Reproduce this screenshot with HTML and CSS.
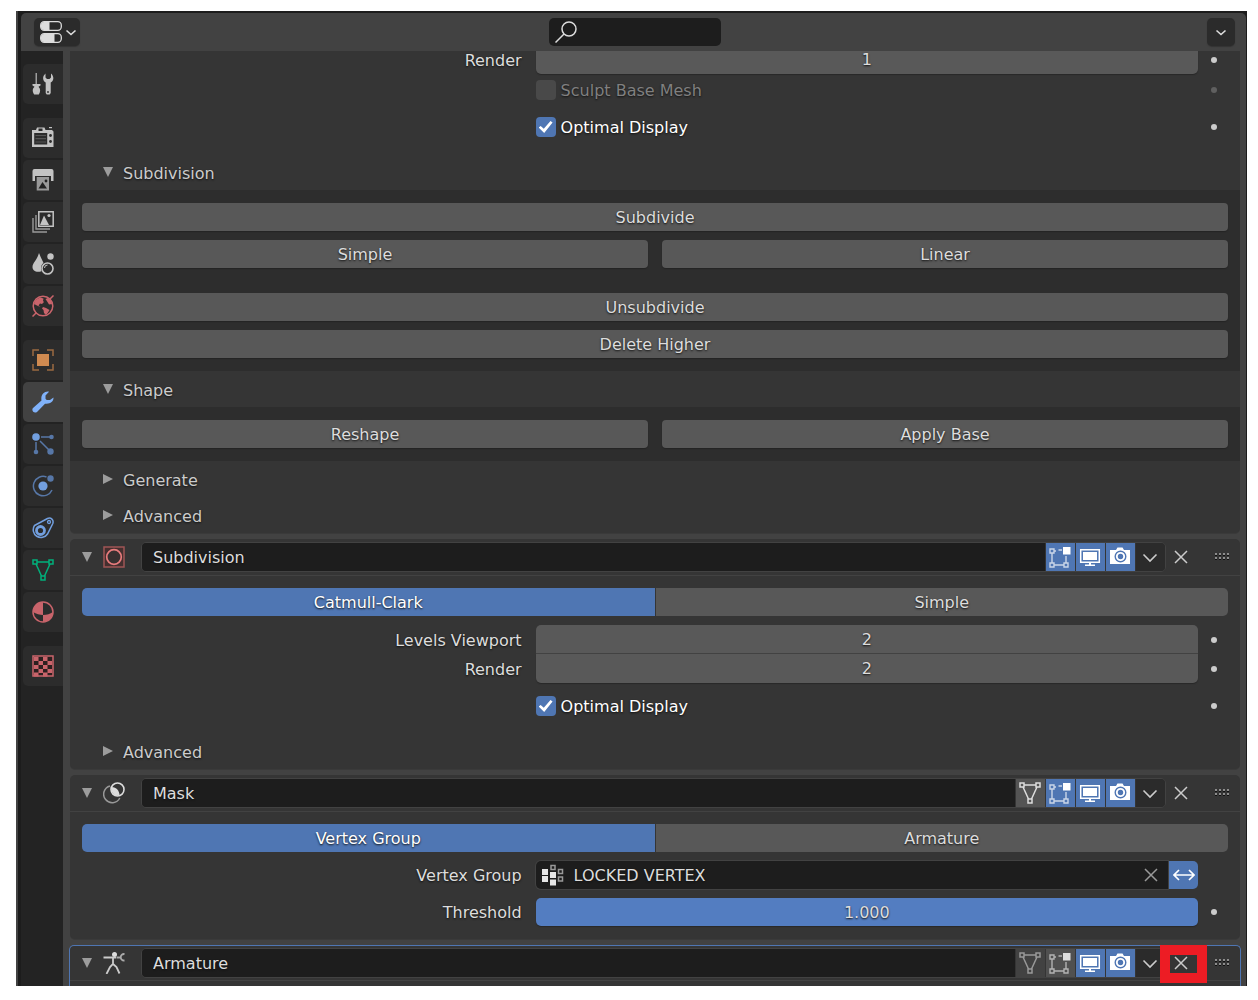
FILE: index.html
```html
<!DOCTYPE html>
<html lang="en">
<head>
<meta charset="utf-8">
<meta name="viewport" content="width=device-width, initial-scale=1">
<title>Modifier Properties</title>
<link rel="stylesheet" href="styles.css">
</head>
<body>
<svg class="sprite" aria-hidden="true">
  <symbol id="down" viewBox="0 0 10 10"><path d="M0 0h10L5 10z" fill="currentColor"/></symbol>
  <symbol id="right" viewBox="0 0 10 10"><path d="M0 0v10L10 5z" fill="currentColor"/></symbol>
  <symbol id="chevron" viewBox="0 0 22 22"><path d="M4.500 8.500l6.500 6.500 6.500-6.500" fill="none" stroke="currentColor" stroke-width="1.600"/></symbol>
  <symbol id="chevron-small" viewBox="0 0 12 12"><path d="M1.500 4.500L6 8.500l4.500-4" fill="none" stroke="currentColor" stroke-width="1.600"/></symbol>
  <symbol id="cross" viewBox="0 0 22 22"><path d="M5 5l12 12M17 5L5 17" fill="none" stroke="currentColor" stroke-width="1.500"/></symbol>
  <symbol id="grip" viewBox="0 0 15 7"><path d="M0 1h15M0 5h15" stroke="#aaa" stroke-width="1.500" stroke-dasharray="2 2"/><path d="M0 2.500h15M0 6.500h15" stroke="#111" stroke-dasharray="2 2"/></symbol>
  <symbol id="mesh" viewBox="0 0 22 22"><g fill="none" stroke="currentColor" stroke-width="1.500"><path d="M1 1h4v4H1zM17 1h4v4h-4zM9 17h4v4H9zM5 3h12M4 5l5.500 12M18 5l-5.500 12"/></g></symbol>
  <symbol id="edit" viewBox="0 0 22 22"><g fill="none" stroke="currentColor" stroke-width="1.400" opacity=".7"><path d="M1 3h4v4H1zM1 17h4v4H1zM15 17h4v4h-4zM5 5h2M9.500 4H13M3 7v10M5 19h10M17 10v7"/></g><path d="M14 1h7.500v7.500H14z" fill="currentColor"/></symbol>
  <symbol id="screen" viewBox="0 0 22 22"><path d="M1.700 3.700h18.600v12.600H1.700z" fill="none" stroke="currentColor" stroke-width="1.500"/><path d="M4 6h14v8H4zM10 16.500h2V18.500h4v1.500H6v-1.500h4z" fill="currentColor"/></symbol>
  <symbol id="camera" viewBox="0 0 22 22"><path d="M1 4h6l1.500-2.500h5L15 4h6v14H1z" fill="currentColor"/><circle cx="11.500" cy="10.500" r="5.300" fill="none" stroke="#4f76b3" stroke-width="1.400"/><circle cx="11.500" cy="10.500" r="2.700" fill="#4f76b3"/></symbol>
  <symbol id="editor" viewBox="0 0 22 22"><g fill="none" stroke="#ddd" stroke-width="1.300"><rect x="0.700" y="0.700" width="20.600" height="8.600" rx="3.500"/><rect x="0.700" y="12.700" width="20.600" height="8.600" rx="3.500"/></g><path d="M4 1h5.500v8H4a3 3 0 0 1-3-3V4a3 3 0 0 1 3-3zM4 13h10.500v8H4a3 3 0 0 1-3-3v-2a3 3 0 0 1 3-3z" fill="#ddd"/></symbol>
  <symbol id="search" viewBox="0 0 22 22"><g fill="none" stroke="#ddd" stroke-width="1.500"><circle cx="14" cy="8" r="7"/><path d="M9 13l-8.500 8.500"/></g></symbol>
  <symbol id="tool" viewBox="0 0 22 22"><path d="M3.500 0H5v11H3.500z" opacity=".75"/><path d="M.500 11h8v1.500l-2 1.200c2.300 2.300 2 5.300.3 7.800H2.200C.500 19 0 16 2.500 13.700l-2-1.200z"/><path d="M13.500 .500V4.500L15 6h2.500L19 4.500V.500c3.300 3 3 7-.3 9V20l-1 1.500h-3l-1-1.500V9.500c-3.300-2-3.500-6-.2-9z"/><circle cx="16" cy="19" r=".9" fill="#2c2c2c"/></symbol>
  <symbol id="render" viewBox="0 0 22 22"><path d="M0 3h4l1-2.500h7.500l1 2.500H20l1.500 1.500V20H0z"/><path d="M17 0h3v1.200h-3z"/><path d="M6.500 1.500h4V4h-4zM2.200 6h13v11.500h-13z" fill="#2c2c2c"/><path d="M3.500 8.500h10.500M3.500 11.700h10.500M3.500 15h10.500" stroke="#555" stroke-width="1.200"/><g fill="#2c2c2c"><circle cx="18.500" cy="8.500" r="1.400"/><circle cx="18.500" cy="14.500" r="1.400"/></g></symbol>
  <symbol id="output" viewBox="0 0 22 22"><path d="M2.500 0h17a2 2 0 0 1 2 2v10h-2.500V7h-16v5H.500V2a2 2 0 0 1 2-2z"/><path d="M4.700 8h12.300v13.500H4.700z" fill="#999"/><path d="M6.500 19.500l4-6.500 4.500 6.500z" fill="#222"/><circle cx="14" cy="12" r="1.400" fill="#222"/></symbol>
  <symbol id="layers" viewBox="0 0 22 22"><path d="M1 7v14h14M4 4v14h14" fill="none" stroke="#999" stroke-width="1.400"/><path d="M6.800 .800h14.400v14.400H6.800z" fill="none" stroke="#c3c3c3" stroke-width="1.500"/><path d="M8 14l4-9.500 5 9.500z"/><circle cx="17" cy="4.500" r="1.600"/></symbol>
  <symbol id="scene" viewBox="0 0 22 22"><path d="M7 0c2 5 3.500 7.500 4.500 10-2.500 2-3 5-2 8.200-5 1.500-9-.2-9-4.200C.500 10 5 7 7 0z"/><circle cx="18.500" cy="3.500" r="3.200"/><circle cx="15.500" cy="15.500" r="5.500" fill="none" stroke="#c3c3c3" stroke-width="1.600"/><path d="M12.500 15a3 3 0 0 1 3-3" fill="none" stroke="#c3c3c3"/></symbol>
  <symbol id="world" viewBox="0 0 22 22"><circle cx="11" cy="11" r="9.800" fill="none" stroke="#c9646b" stroke-width="1.500"/><path d="M3.500 5L8 2.500l3.500 1-.5 2.500 1 1-2 2-2-.5-1.500 2 2 1.500L6 11 2 9zM11 12l3 1 3.500 2-1.500 2.500-2 2.500-2-2-.5-3-1.500-1.500zM13.500 4l2.500-1 3.500 3 .5 3-3 .5-1.500-2.500z" fill="#c9646b"/><path d="M21.500 .500l-4 4M4.500 17.500l-4 4" stroke="#c9646b" stroke-width="1.500"/></symbol>
  <symbol id="object" viewBox="0 0 22 22"><path d="M5 5h12v12H5z" fill="#cf8a50"/><path d="M1 7V1h6M15 1h6v6M21 15v6h-6M7 21H1v-6" fill="none" stroke="#9b6940" stroke-width="1.500"/></symbol>
  <symbol id="wrench" viewBox="0 0 22 22"><path d="M1 17L9.500 9.500C8.500 4 12 0 17 .700L13.500 4.500v3.200l1.200 1.200H18l3.500-2.500C21.800 10.500 18 13.500 13 12.700L5 21c-3 2-6-1.500-4-4z" fill="#80b2fa"/></symbol>
  <symbol id="particles" viewBox="0 0 22 22"><path d="M9 4h9M4 9v9M8 8l10 10" stroke="#5777a7" stroke-width="1.500"/><circle cx="4" cy="4" r="3.800" fill="#729fdf"/><g fill="#5777a7"><circle cx="19.500" cy="4" r="2.300"/><circle cx="4" cy="19" r="2.300"/><circle cx="18.500" cy="18.500" r="3.200"/></g></symbol>
  <symbol id="physics" viewBox="0 0 22 22"><path d="M14.500 2A9.700 9.700 0 1 0 20 15" fill="none" stroke="#5777a7" stroke-width="1.500"/><circle cx="11" cy="11" r="4.600" fill="#729fdf"/><circle cx="18.500" cy="3.500" r="3.200" fill="#5777a7"/></symbol>
  <symbol id="constraint" viewBox="0 0 22 22"><g fill="none" stroke="#729fdf"><path d="M2.500 8.500L15.500 1.500C19 0 22 3 20.800 6.500L15.500 17A7.700 7.700 0 1 1 2.500 8.500z" stroke-width="1.500"/><circle cx="8.500" cy="13.500" r="4" stroke-width="2.800"/><circle cx="17" cy="5" r="1.500" stroke-width="1.300"/></g></symbol>
  <symbol id="material" viewBox="0 0 22 22"><circle cx="11" cy="11" r="10" fill="none" stroke="#c9646b" stroke-width="1.500"/><path d="M11 1v13c-3 0-7-1-10-3A10 10 0 0 1 11 1zM11 14c4 0 7-1 10-3a10 10 0 0 1-10 10z" fill="#c9646b"/></symbol>
  <symbol id="texture" viewBox="0 0 22 22"><path d="M1 1h20v20H1z" fill="#2c2020" stroke="#c9646b" stroke-width="1.500"/><path d="M2 4h18M2 12h18M2 19.500h18" stroke="#c9646b" stroke-width="4" stroke-dasharray="4.500 4.500"/><path d="M6.500 8h14.500M6.500 16h14.500" stroke="#c9646b" stroke-width="4" stroke-dasharray="4.500 4.500"/></symbol>
  <symbol id="subsurf" viewBox="0 0 22 22"><path d="M1 1h20v20H1z" fill="#452f2f" stroke="#9e5556" stroke-width="1.500"/><circle cx="11" cy="11" r="7.300" fill="#383030" stroke="#e87c7d" stroke-width="1.700"/></symbol>
  <symbol id="mask" viewBox="0 0 22 22"><path d="M7 4A8.500 8.500 0 1 0 16.800 16" fill="none" stroke="#999" stroke-width="1.500"/><circle cx="14.500" cy="7.500" r="6.500" fill="none" stroke="#ddd" stroke-width="1.600"/><path d="M8.500 5c5 0 8 4 8 8.500-5 1-9-3-8-8.500z" fill="#ddd"/></symbol>
  <symbol id="armature" viewBox="0 0 22 22"><circle cx="11.500" cy="2.500" r="2.500" fill="#ddd"/><path d="M.500 5.500H13M10 6v6l-3 3-3.500 7M10 12l3.500 3 3 6.500" fill="none" stroke="#ccc" stroke-width="1.800"/><path d="M13.500 5.500H17M21.500 2c-5-.5-5 7 0 6.500" fill="none" stroke="#aaa" stroke-width="1.800"/></symbol>
  <symbol id="group" viewBox="0 0 22 22"><path d="M0 5h6v6H0zM8 8h6v6H8zM0 12h6v6H0zM8 15.500h6v6H8z" fill="#e6e6e6"/><path d="M9 1.500h4v4H9zM16.500 5.500h4v4h-4zM16.500 13h4v4h-4z" fill="none" stroke="#999" stroke-width="1.500"/></symbol>
  <symbol id="swap" viewBox="0 0 22 22"><path d="M1 11h20M6 6l-5 5 5 5M16 6l5 5-5 5" fill="none" stroke="#fff" stroke-width="1.700"/></symbol>
</svg>

<div class="window">
  <header class="topbar">
    <button class="editor-type" aria-label="Editor type"><svg class="icon"><use href="#editor"/></svg><svg class="mini"><use href="#chevron-small"/></svg></button>
    <label class="search"><svg class="icon"><use href="#search"/></svg><input type="text" aria-label="Search"></label>
    <button class="options" aria-label="Options"><svg class="mini"><use href="#chevron-small"/></svg></button>
  </header>
  <div class="editor">
    <nav class="tabs" aria-label="Property tabs">
      <div class="tab-group">
        <button aria-label="Tool"><svg class="icon"><use href="#tool"/></svg></button>
      </div>
      <div class="tab-group">
        <button aria-label="Render"><svg class="icon"><use href="#render"/></svg></button>
        <button aria-label="Output"><svg class="icon"><use href="#output"/></svg></button>
        <button aria-label="View layer"><svg class="icon"><use href="#layers"/></svg></button>
        <button aria-label="Scene"><svg class="icon"><use href="#scene"/></svg></button>
        <button aria-label="World"><svg class="icon"><use href="#world"/></svg></button>
      </div>
      <div class="tab-group">
        <button aria-label="Object"><svg class="icon"><use href="#object"/></svg></button>
        <button class="active" aria-label="Modifiers"><svg class="icon"><use href="#wrench"/></svg></button>
        <button aria-label="Particles"><svg class="icon"><use href="#particles"/></svg></button>
        <button aria-label="Physics"><svg class="icon"><use href="#physics"/></svg></button>
        <button aria-label="Constraints"><svg class="icon"><use href="#constraint"/></svg></button>
        <button class="data" aria-label="Data"><svg class="icon"><use href="#mesh"/></svg></button>
        <button aria-label="Material"><svg class="icon"><use href="#material"/></svg></button>
      </div>
      <div class="tab-group">
        <button aria-label="Texture"><svg class="icon"><use href="#texture"/></svg></button>
      </div>
    </nav>

    <main class="properties">
      <section class="panel scrolled">
        <div class="rows">
          <div class="stack">
            <div class="row"><label for="mr-render">Render</label><input class="value" id="mr-render" type="text" value="1"><button class="dot" aria-label="Animate"></button></div>
            <div class="row disabled"><label class="check"><input type="checkbox" disabled><span>Sculpt Base Mesh</span></label><button class="dot" aria-label="Animate" disabled></button></div>
          </div>
          <div class="row"><label class="check"><input type="checkbox" checked><span>Optimal Display</span></label><button class="dot" aria-label="Animate"></button></div>
        </div>
        <button class="subheader"><svg class="tri"><use href="#down"/></svg>Subdivision</button>
        <div class="subpanel">
          <div class="buttons">
            <button class="wide">Subdivide</button>
            <button>Simple</button>
            <button>Linear</button>
          </div>
          <div class="buttons">
            <button class="wide">Unsubdivide</button>
            <button class="wide">Delete Higher</button>
          </div>
        </div>
        <button class="subheader"><svg class="tri"><use href="#down"/></svg>Shape</button>
        <div class="subpanel">
          <div class="buttons">
            <button>Reshape</button>
            <button>Apply Base</button>
          </div>
        </div>
        <button class="subheader"><svg class="tri"><use href="#right"/></svg>Generate</button>
        <button class="subheader"><svg class="tri"><use href="#right"/></svg>Advanced</button>
      </section>

      <section class="panel">
        <div class="panel-header">
          <button class="plain" aria-label="Collapse"><svg class="tri"><use href="#down"/></svg></button>
          <svg class="icon type"><use href="#subsurf"/></svg>
          <div class="name-group">
            <input type="text" value="Subdivision" aria-label="Modifier name">
            <button class="on" aria-label="Edit mode"><svg class="icon"><use href="#edit"/></svg></button>
            <button class="on" aria-label="Realtime"><svg class="icon"><use href="#screen"/></svg></button>
            <button class="on" aria-label="Render"><svg class="icon"><use href="#camera"/></svg></button>
            <button class="menu" aria-label="More"><svg class="icon"><use href="#chevron"/></svg></button>
          </div>
          <button class="plain remove" aria-label="Remove"><svg class="icon"><use href="#cross"/></svg></button>
          <svg class="grip"><use href="#grip"/></svg>
        </div>
        <div class="rows">
          <div class="segmented"><button class="on" aria-pressed="true">Catmull-Clark</button><button aria-pressed="false">Simple</button></div>
          <div class="stack">
            <div class="row"><label for="ss-view">Levels Viewport</label><input class="value first" id="ss-view" type="text" value="2"><button class="dot" aria-label="Animate"></button></div>
            <div class="row"><label for="ss-render">Render</label><input class="value last" id="ss-render" type="text" value="2"><button class="dot" aria-label="Animate"></button></div>
          </div>
          <div class="row"><label class="check"><input type="checkbox" checked><span>Optimal Display</span></label><button class="dot" aria-label="Animate"></button></div>
        </div>
        <button class="subheader"><svg class="tri"><use href="#right"/></svg>Advanced</button>
      </section>

      <section class="panel">
        <div class="panel-header">
          <button class="plain" aria-label="Collapse"><svg class="tri"><use href="#down"/></svg></button>
          <svg class="icon type"><use href="#mask"/></svg>
          <div class="name-group">
            <input type="text" value="Mask" aria-label="Modifier name">
            <button aria-label="On cage"><svg class="icon"><use href="#mesh"/></svg></button>
            <button class="on" aria-label="Edit mode"><svg class="icon"><use href="#edit"/></svg></button>
            <button class="on" aria-label="Realtime"><svg class="icon"><use href="#screen"/></svg></button>
            <button class="on" aria-label="Render"><svg class="icon"><use href="#camera"/></svg></button>
            <button class="menu" aria-label="More"><svg class="icon"><use href="#chevron"/></svg></button>
          </div>
          <button class="plain remove" aria-label="Remove"><svg class="icon"><use href="#cross"/></svg></button>
          <svg class="grip"><use href="#grip"/></svg>
        </div>
        <div class="rows">
          <div class="segmented"><button class="on" aria-pressed="true">Vertex Group</button><button aria-pressed="false">Armature</button></div>
          <div class="row">
            <label for="mask-group">Vertex Group</label>
            <div class="picker">
              <div class="picker-field"><svg class="icon"><use href="#group"/></svg><input id="mask-group" type="text" value="LOCKED VERTEX"><button class="plain" aria-label="Clear"><svg class="icon"><use href="#cross"/></svg></button></div>
              <button class="invert" aria-label="Invert"><svg class="icon"><use href="#swap"/></svg></button>
            </div>
          </div>
          <div class="row"><label for="mask-threshold">Threshold</label><input class="value slider" id="mask-threshold" type="text" value="1.000"><button class="dot" aria-label="Animate"></button></div>
        </div>
      </section>

      <section class="panel selected">
        <div class="panel-header">
          <button class="plain" aria-label="Collapse"><svg class="tri"><use href="#down"/></svg></button>
          <svg class="icon type"><use href="#armature"/></svg>
          <div class="name-group">
            <input type="text" value="Armature" aria-label="Modifier name">
            <button class="off" aria-label="On cage"><svg class="icon"><use href="#mesh"/></svg></button>
            <button class="dim" aria-label="Edit mode"><svg class="icon"><use href="#edit"/></svg></button>
            <button class="on" aria-label="Realtime"><svg class="icon"><use href="#screen"/></svg></button>
            <button class="on" aria-label="Render"><svg class="icon"><use href="#camera"/></svg></button>
            <button class="menu" aria-label="More"><svg class="icon"><use href="#chevron"/></svg></button>
          </div>
          <button class="plain remove marked" aria-label="Remove"><svg class="icon"><use href="#cross"/></svg></button>
          <svg class="grip"><use href="#grip"/></svg>
        </div>
        <div class="rows"></div>
      </section>
    </main>
  </div>
</div>
</body>
</html>
```
FILE: styles.css
```css
* { box-sizing: border-box; }

body {
  margin: 0;
  height: 100vh;
  padding: 11px 11px 14px 16px;
  background: #fff;
  color: #ddd;
  font: 16px/20px "DejaVu Sans", sans-serif;
}

button, input {
  margin: 0;
  padding: 0;
  border: 0;
  background: none;
  color: inherit;
  font: inherit;
  text-shadow: inherit;
}

button { display: flex; align-items: center; justify-content: center; }
input { min-width: 0; }
svg { display: block; flex: none; }

.sprite { position: absolute; width: 0; height: 0; }
.icon { width: 22px; height: 22px; }
.mini { width: 12px; height: 12px; }
.tri { width: 10px; height: 10px; color: #9c9c9c; }

.window {
  display: flex;
  flex-direction: column;
  height: 100%;
  padding: 2px 1px 0 3px;
  border-left: 2px solid #424242;
  background: #1c1c1c;
  overflow: hidden;
}

.topbar {
  display: grid;
  grid-template-columns: 1fr 172px 1fr;
  align-items: center;
  flex: none;
  height: 38px;
  padding: 0 11px 0 13px;
  border-radius: 5px 5px 0 0;
  background: #424242;
}

.editor-type, .options {
  height: 28px;
  border-radius: 5px;
  background: #2b2b2b;
  box-shadow: 0 1px 1px #333;
}
.editor-type { width: 46px; gap: 3px; padding-left: 2px; }
.options { width: 28px; justify-self: end; }

.search {
  display: flex;
  align-items: center;
  height: 28px;
  padding: 0 6px;
  border-radius: 5px;
  background: #1d1d1d;
}
.search input { flex: 1; }

.editor { display: flex; flex: 1; min-height: 0; }

.tabs {
  display: flex;
  flex-direction: column;
  gap: 14px;
  flex: none;
  width: 42px;
  padding: 13px 0 0 2px;
  background: #232323;
}
.tab-group { display: flex; flex-direction: column; gap: 2px; }
.tab-group button {
  width: 40px;
  height: 40px;
  border-radius: 5px 0 0 5px;
  background: #2c2c2c;
  fill: #c3c3c3;
}
.tab-group .active { background: #424242; }
.tab-group .data { color: #00b07b; }

.properties {
  display: flex;
  flex-direction: column;
  gap: 6px;
  flex: 1;
  min-width: 0;
  padding: 0 6px 0 7px;
  background: #424242;
  overflow: hidden;
}

.panel {
  flex: none;
  border-radius: 5px;
  background: #353535;
  box-shadow: 0 1px 0 #3a3a3a;
  text-shadow: 0 1px 2px #111;
}
.panel.scrolled { margin-top: -6px; }
.scrolled .rows { padding-top: 0; }
.panel.selected {
  margin: 0 -1px;
  border: 1px solid #4f76b3;
  border-bottom: 0;
  border-radius: 5px 5px 0 0;
}

.panel-header {
  display: flex;
  align-items: center;
  height: 37px;
  padding: 0 10px 0 12px;
  border-bottom: 1px solid #424242;
}
.selected .panel-header { height: 35px; }
.panel-header .type { margin: 0 16px 0 11px; }
.grip { width: 15px; height: 7px; margin: 0 0 2px 19px; }

.name-group {
  display: flex;
  flex: 1;
  gap: 1px;
  height: 30px;
  border: 1px solid #424242;
  border-radius: 5px;
  background: #353535;
  overflow: hidden;
}
.name-group input { flex: 1; padding: 2px 11px 0; background: #1d1d1d; }
.name-group button { width: 29px; padding-right: 1px; background: #545454; color: #ddd; }
.name-group .on { background: #4f76b3; color: #fff; }
.name-group .off { background: #424242; color: #999; }
.name-group .dim { background: #505050; color: #ddd; }
.name-group .menu { background: #2b2b2b; color: #ccc; }

.plain { color: #ccc; }
.remove { width: 30px; height: 28px; }
.marked { position: relative; }
.marked::after {
  content: "";
  position: absolute;
  inset: -4px -11px -6px -6px;
  border: 10px solid #ed1c24;
}

.rows { display: flex; flex-direction: column; gap: 9px; padding: 12px 12px 13px; }

.row {
  display: grid;
  grid-template-columns: 2fr 3fr 18px;
  column-gap: 12px;
  align-items: center;
  height: 28px;
}
.row > label:first-child:not(.check) { padding: 2px 2px 0 0; text-align: right; }
.stack .row { height: 29px; }
.stack .row.disabled { height: 28px; margin-top: 2px; }
.disabled { color: #808080; }

.value {
  width: 100%;
  height: 100%;
  border-radius: 5px;
  background: #595959;
  box-shadow: 0 1px 1px #282828;
  text-align: center;
}
.value.first { border-bottom: 1px solid #424242; border-radius: 5px 5px 0 0; box-shadow: none; }
.value.last { border-radius: 0 0 5px 5px; }
.value.slider { background: #537dc1; }

.dot { width: 6px; height: 6px; margin-left: 1px; border-radius: 50%; background: #ccc; }
.dot:disabled { background: #606060; }

.check { display: flex; align-items: center; gap: 5px; grid-column: 2; color: #fff; }
.check span { padding-top: 2px; }
.disabled .check { color: #808080; }
.check input {
  display: grid;
  place-items: center;
  width: 20px;
  height: 20px;
  appearance: none;
  border-radius: 4px;
  background: #494949;
}
.check input:checked { background: #4f76b3; }
.check input:checked::before {
  content: "";
  width: 14px;
  height: 12px;
  background: #fff;
  clip-path: polygon(0 55%, 15% 42%, 37% 65%, 85% 0, 100% 12%, 40% 100%);
}

.subheader {
  justify-content: flex-start;
  gap: 10px;
  width: 100%;
  height: 36px;
  padding: 4px 33px 0;
  color: #ccc;
}
.subheader .tri { margin-bottom: 4px; }
.subpanel { display: flex; flex-direction: column; gap: 25px; padding: 13px 12px; background: #2d2d2d; }

.buttons { display: grid; grid-template-columns: 1fr 1fr; gap: 9px 14px; }
.buttons button, .segmented button { height: 28px; padding-top: 2px; background: #585858; }
.buttons button { border-radius: 4px; box-shadow: 0 1px 1px #242424; }
.buttons .wide { grid-column: 1 / -1; }

.segmented { display: grid; grid-template-columns: 1fr 1fr; gap: 1px; border-radius: 5px; overflow: hidden; }
.segmented .on { background: #4f76b3; color: #fff; }

.picker { display: flex; gap: 1px; height: 28px; }
.picker-field {
  display: flex;
  align-items: center;
  flex: 1;
  gap: 10px;
  min-width: 0;
  padding: 0 6px;
  border-radius: 5px 0 0 5px;
  background: #1d1d1d;
  box-shadow: 0 0 0 1px #424242;
}
.picker-field input { flex: 1; padding-top: 2px; }
.picker-field .plain { color: #999; }
.invert { width: 29px; border-radius: 0 5px 5px 0; background: #4f76b3; }
```
